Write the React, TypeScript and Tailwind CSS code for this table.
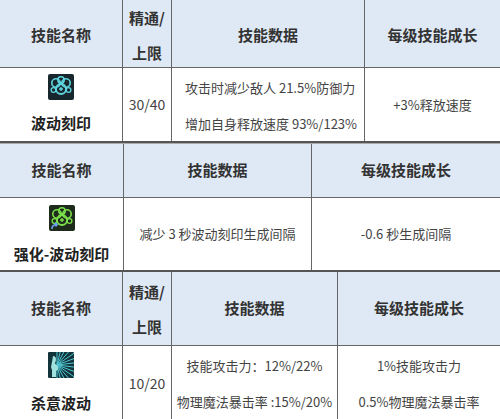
import React from 'react';

const font = { fontFamily: '"Noto Sans CJK SC", "Noto Sans", sans-serif' };

function WaveIcon({ green }: { green?: boolean }) {
  const c = green ? '#7be04a' : '#5fd6e0';
  return (
    <svg width="26" height="26" viewBox="0 0 26 26" className="shrink-0">
      <rect x="0" y="0" width="26" height="26" rx="2" fill={green ? '#1d2a1c' : '#18272d'} />
      <circle cx="8" cy="9" r="4.2" fill="none" stroke={c} strokeWidth="1.6" />
      <circle cx="18" cy="9" r="4.2" fill="none" stroke={c} strokeWidth="1.6" />
      <circle cx="13" cy="6" r="3.2" fill="none" stroke={c} strokeWidth="1.5" />
      <circle cx="13" cy="15" r="5" fill="none" stroke={c} strokeWidth="1.8" />
      <path d="M11 15h4M13 13v4" stroke={c} strokeWidth="1.4" />
      <circle cx="5.5" cy="16" r="2.4" fill="none" stroke={c} strokeWidth="1.3" />
      <circle cx="20.5" cy="16" r="2.4" fill="none" stroke={c} strokeWidth="1.3" />
      {green && (
        <path d="M3 24c0-3 2-4.5 5-4.5M6 18l2.2 1.5L6.5 21.5" fill="none" stroke="#6aa0f0" strokeWidth="1.6" />
      )}
    </svg>
  );
}

function KillIcon() {
  const rays = Array.from({ length: 14 }, (_, i) => {
    const a = (-Math.PI / 2) + (i * Math.PI) / 13;
    return (
      <line key={i} x1="9" y1="13" x2={9 + Math.cos(a) * 24} y2={13 + Math.sin(a) * 24} stroke="#4fc6d2" strokeWidth="1" />
    );
  });
  return (
    <svg width="26" height="26" viewBox="0 0 26 26" className="shrink-0 overflow-hidden">
      <rect x="0" y="0" width="26" height="26" rx="1" fill="#14343c" />
      {rays}
      <path d="M5 4c2 0 3 1.5 3 3.5s-1 3-1 4l3 3v3l-2 1.5V25H4v-7l-1-3 1-5z" fill="#9fe3dc" />
    </svg>
  );
}

const head = 'flex items-center justify-center border-r border-[#666] last:border-r-0 text-[15px] font-bold text-[#333]';
const cell = 'flex items-center justify-center border-r border-[#666] last:border-r-0 text-[13px] text-[#444]';
const stack = 'flex flex-col items-center border-r border-[#666] last:border-r-0 text-[13px] text-[#444] leading-[22px]';

export default function App() {
  return (
    <div className="w-[500px] h-[419px] overflow-hidden bg-white" style={font}>
      {/* table 1 */}
      <div className="grid grid-cols-[123px_49px_193px_135px] h-[68px] bg-[#dfe9f5] border-b border-[#666]">
        <div className={head}>技能名称</div>
        <div className={`${head} flex-col leading-[35px]`}>
          <span>精通/</span>
          <span>上限</span>
        </div>
        <div className={head}>技能数据</div>
        <div className={head}>每级技能成长</div>
      </div>
      <div className="grid grid-cols-[123px_49px_193px_135px] h-[75px] border-b-2 border-[#555]">
        <div className={`${stack} pt-[6px]`}>
          <WaveIcon />
          <span className="mt-[12px] text-[15px] font-bold text-[#222]">波动刻印</span>
        </div>
        <div className={`${cell} text-[14px]`}>30/40</div>
        <div className={`${stack} items-start pl-[13px] pt-[9px]`}>
          <span>攻击时减少敌人 21.5%防御力</span>
          <span className="mt-[14px]">增加自身释放速度 93%/123%</span>
        </div>
        <div className={cell}>+3%释放速度</div>
      </div>
      <div className="h-px bg-[#aaa]" />

      {/* table 2 */}
      <div className="grid grid-cols-[124px_188px_188px] h-[54px] bg-[#dfe9f5] border-b border-[#666]">
        <div className={head}>技能名称</div>
        <div className={head}>技能数据</div>
        <div className={head}>每级技能成长</div>
      </div>
      <div className="grid grid-cols-[124px_188px_188px] h-[74px] border-b-2 border-[#555]">
        <div className={`${stack} pt-[7px]`}>
          <WaveIcon green />
          <span className="mt-[12px] text-[15px] font-bold text-[#222]">强化-波动刻印</span>
        </div>
        <div className={cell}>减少 3 秒波动刻印生成间隔</div>
        <div className={cell}>-0.6 秒生成间隔</div>
      </div>

      {/* table 3 */}
      <div className="grid grid-cols-[123px_49px_166px_162px] h-[74px] bg-[#dfe9f5] border-b border-[#666]">
        <div className={head}>技能名称</div>
        <div className={`${head} flex-col leading-[35px]`}>
          <span>精通/</span>
          <span>上限</span>
        </div>
        <div className={head}>技能数据</div>
        <div className={head}>每级技能成长</div>
      </div>
      <div className="grid grid-cols-[123px_49px_166px_162px] h-[80px]">
        <div className={`${stack} justify-between pt-[6px] pb-[12px]`}>
          <KillIcon />
          <span className="text-[15px] font-bold text-[#222]">杀意波动</span>
        </div>
        <div className={`${stack} text-[14px] pt-[26px]`}>10/20</div>
        <div className={`${stack} pt-[9px]`}>
          <span>技能攻击力：12%/22%</span>
          <span className="mt-[14px]">物理魔法暴击率 :15%/20%</span>
        </div>
        <div className={`${stack} pt-[9px]`}>
          <span>1%技能攻击力</span>
          <span className="mt-[14px]">0.5%物理魔法暴击率</span>
        </div>
      </div>
    </div>
  );
}
